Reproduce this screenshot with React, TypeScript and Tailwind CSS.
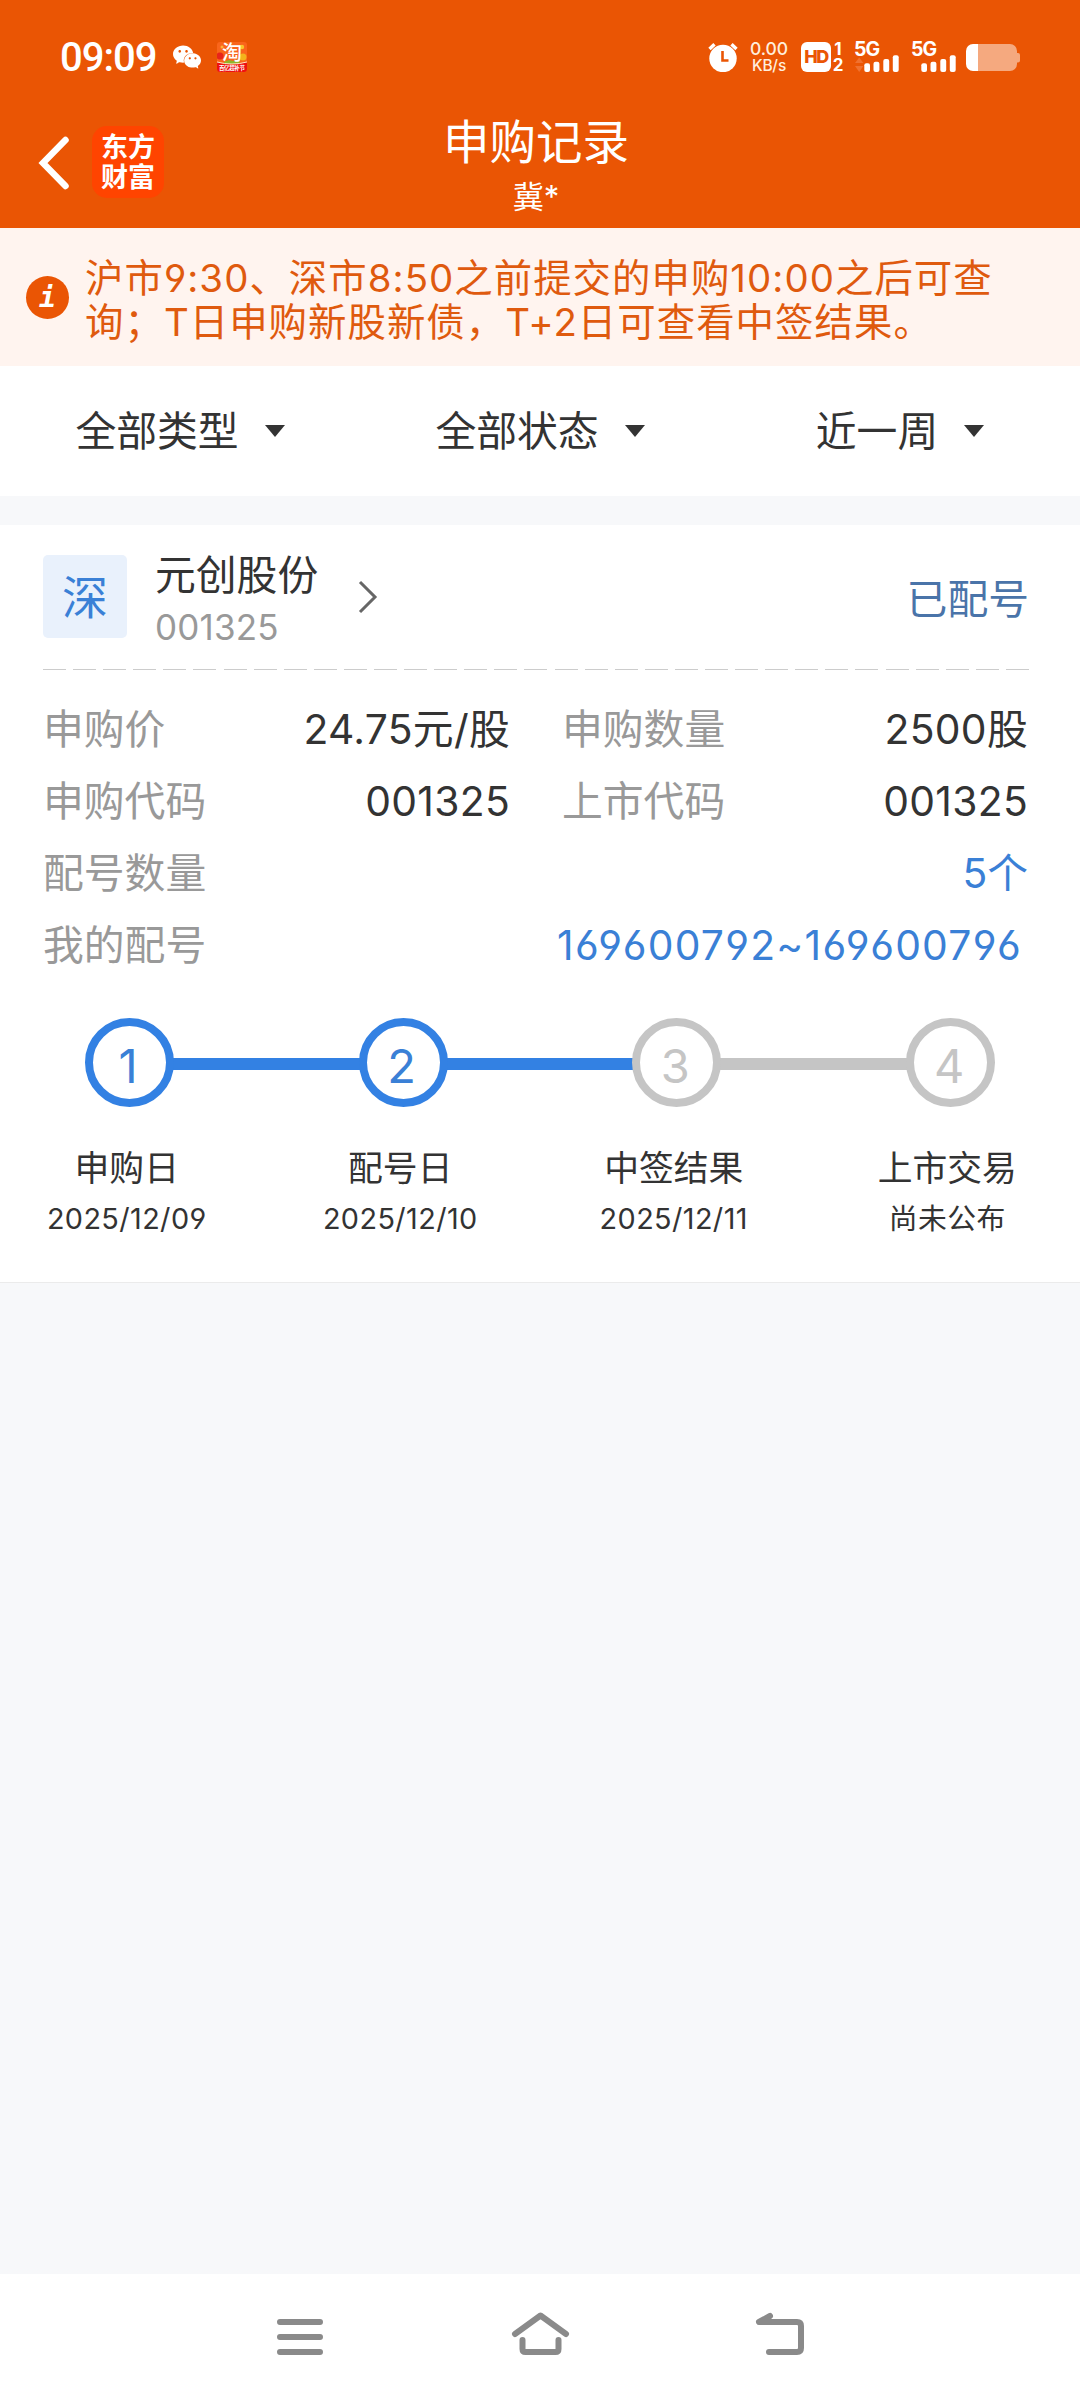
import { SiWechat } from "react-icons/si";

const filters = ["全部类型", "全部状态", "近一周"];

const steps = [
  { title: "申购日", date: "2025/12/09", done: true },
  { title: "配号日", date: "2025/12/10", done: true },
  { title: "中签结果", date: "2025/12/11", done: false },
  { title: "上市交易", date: "尚未公布", done: false },
];

function Signal({ data }: { data?: boolean }) {
  return (
    <div className="flex h-[30px] w-[44px] flex-col">
      <span className="ml-[-1px] text-[19.5px] leading-[15px] font-bold tracking-[-1px]">
        5G
      </span>
      <svg
        className="mt-[-2px]"
        width="44"
        height="17"
        viewBox="0 13 44 17"
        fill="#fff"
      >
        {data && (
          <path d="M4.2 15.5L8.4 21H0zM4.2 30L8.4 24H0z" fill="#f0712f" />
        )}
        <rect x="9.3" y="21.3" width="5.7" height="8.7" rx="2" />
        <rect x="18.5" y="19.7" width="5.9" height="10.3" rx="2" />
        <rect x="28.3" y="17" width="5.9" height="13" rx="2" />
        <rect x="37.8" y="13.3" width="5.9" height="16.7" rx="2" />
      </svg>
    </div>
  );
}

function StatusBar() {
  return (
    <div className="flex h-[114px] items-center pr-[60px] pl-[60px] text-white">
      <span className="w-[100px] pt-[2px] font-[Roboto] text-[40px] leading-none font-medium tracking-[-1px]">
        09:09
      </span>
      <SiWechat className="ml-[13px] h-[28px] w-[28px]" />
      <svg className="ml-[16px]" width="30" height="30" viewBox="0 0 30 30">
        <defs>
          <clipPath id="tb">
            <rect width="30" height="30" rx="3" />
          </clipPath>
        </defs>
        <g clipPath="url(#tb)">
          <rect width="30" height="30" fill="#f9651b" />
          <circle cx="3" cy="14" r="3.5" fill="#e8241a" />
          <circle cx="26" cy="15" r="3.5" fill="#f3b21c" />
          <circle cx="25" cy="5" r="2.2" fill="#f7c52a" />
          <circle cx="5" cy="5" r="1.5" fill="#fbb33a" />
          <path d="M7 20l5-2 4 1 6-2 1 5H7z" fill="#8fb52a" />
          <path d="M0 20q15 5 30 0v10H0z" fill="#ef1010" />
          <path d="M0 20q15 4 30 0" fill="none" stroke="#ffe0c0" />
          <text x="5" y="18" fontSize="20" fontWeight="500" fill="#fff">
            淘
          </text>
          <text
            x="2"
            y="28"
            fontSize="5.5"
            fontWeight="700"
            fill="#fff"
            textLength="26"
          >
            百亿超补节
          </text>
        </g>
      </svg>
      <div className="ml-auto flex items-center">
        <svg width="30" height="30" viewBox="0 0 30 30">
          <circle cx="15" cy="16.5" r="13.7" fill="#fff" />
          <path
            d="M1.5 7L6.5 2.2M28.5 7L23.5 2.2"
            stroke="#fff"
            strokeWidth="3.4"
          />
          <path
            d="M14.5 9v9.5h6"
            fill="none"
            stroke="#ea5504"
            strokeWidth="2.6"
          />
        </svg>
        <div className="ml-[12px] flex w-[38px] flex-col items-center font-medium text-[#ffeedd]">
          <span className="text-[17.5px] leading-[15px]">0.00</span>
          <span className="mt-[1px] text-[15.5px] leading-[17px] tracking-[-0.2px]">
            KB/s
          </span>
        </div>
        <div className="ml-[13px] flex h-[30px] w-[30px] items-center justify-center rounded-[6px] bg-white text-[18px] leading-none font-extrabold tracking-[-1.5px] text-[#ea5504]">
          HD
        </div>
        <div className="ml-[2px] flex w-[10px] flex-col items-center text-[17px] leading-[16px] font-bold">
          <span>1</span>
          <span>2</span>
        </div>
        <div className="ml-[12px] flex gap-[13px]">
          <Signal data />
          <Signal />
        </div>
        <svg className="ml-[10px]" width="54" height="27" viewBox="0 0 54 27">
          <path
            d="M12 0h32a7 7 0 0 1 7 7v2h1q2 0 2 2v5.5q0 2-2 2h-1V20a7 7 0 0 1-7 7H12z"
            fill="#f5a97f"
          />
          <path d="M12 0H7a7 7 0 0 0-7 7v13a7 7 0 0 0 7 7h5z" fill="#fff" />
        </svg>
      </div>
    </div>
  );
}

function TitleBar() {
  return (
    <div className="flex h-[114px] text-white">
      <div className="flex w-[360px] pt-[12px] pl-[37px]">
        <svg className="mt-[10px]" width="34" height="54" viewBox="0 0 34 54">
          <path
            d="M28.5 4L6 27l22.5 23"
            fill="none"
            stroke="#fff"
            strokeWidth="6.5"
            strokeLinecap="round"
          />
        </svg>
        <div className="ml-[21px] flex h-[72px] w-[72px] flex-col items-center justify-center rounded-[15px] bg-[#ff4400] pt-[2px] text-[27px] leading-[30px] font-bold">
          <span>东方</span>
          <span>财富</span>
        </div>
      </div>
      <div className="flex w-[352px] flex-col items-center">
        <h1 className="text-[46.5px] leading-[56px]">申购记录</h1>
        <p className="text-[31px] leading-[54px]">冀*</p>
      </div>
    </div>
  );
}

function Notice() {
  return (
    <div className="flex h-[138px] bg-[#fff4ef] pt-[28px] pl-[26px]">
      <div className="mt-[20px] flex h-[43px] w-[43px] items-center justify-center rounded-full bg-[#ea5504] font-['DejaVu_Sans_Mono'] text-[28px] leading-none font-bold text-white italic">
        i
      </div>
      <p className="ml-[16px] text-[38.4px] leading-[44px] tracking-[1.05px] whitespace-nowrap text-[#df5a0e]">
        沪市9:30、深市8:50之前提交的申购10:00之后可查
        <br />
        询；T日申购新股新债，T+2日可查看中签结果。
      </p>
    </div>
  );
}

function Filters() {
  return (
    <div className="grid h-[130px] grid-cols-3 bg-white">
      {filters.map((item) => (
        <div key={item} className="flex items-center justify-center">
          <span className="text-[40.8px] leading-none">{item}</span>
          <svg className="ml-[26px]" width="20" height="12" viewBox="0 0 20 12">
            <path d="M0 0h20L10 12z" fill="#333" />
          </svg>
        </div>
      ))}
    </div>
  );
}

function Field({ label, value }: { label: string; value: string }) {
  return (
    <div className="flex justify-between">
      <span className="text-[#999]">{label}</span>
      <span className="tracking-[0.3px]">{value}</span>
    </div>
  );
}

function Steps() {
  return (
    <div className="mt-[37px]">
      <div className="flex items-center pl-[85px]">
        {steps.map((step, idx) => (
          <div key={step.title} className="flex items-center">
            {idx > 0 && (
              <div
                className={`mx-[-4px] mt-[3px] h-[12px] w-[192.7px] ${
                  steps[idx - 1].done ? "bg-[#3381e3]" : "bg-[#c5c5c5]"
                }`}
              />
            )}
            <div
              className={`relative z-10 flex h-[89px] w-[89px] items-center justify-center rounded-full border-[8.5px] bg-white pt-[6px] pr-[3px] text-[47px] leading-none ${
                step.done
                  ? "border-[#3381e3] text-[#3a80d6]"
                  : "border-[#c5c5c5] text-[#c5c5c5]"
              }`}
            >
              {idx + 1}
            </div>
          </div>
        ))}
      </div>
      <div className="ml-[-10px] grid w-[1094px] grid-cols-4 text-center">
        {steps.map((step) => (
          <div key={step.title} className="pt-[36px]">
            <p className="text-[34.8px] leading-[50px]">{step.title}</p>
            <p className="text-[28.8px] leading-[52px] tracking-[0.4px]">
              {step.date}
            </p>
          </div>
        ))}
      </div>
    </div>
  );
}

function RecordCard() {
  return (
    <div className="mt-[29px] h-[758px] border-b border-[#ebebeb] bg-white pt-[30px]">
      <div className="flex h-[83px] pr-[51px] pl-[43px]">
        <div className="flex h-[83px] w-[84px] items-center justify-center rounded-[5px] bg-[#e9f1fc] text-[46px] leading-none text-[#3a80d6]">
          深
        </div>
        <div className="mt-[-6px] ml-[28px]">
          <p className="text-[40.8px] leading-[52px]">元创股份</p>
          <p className="text-[35px] leading-[52px] tracking-[0.2px] text-[#999]">
            001325
          </p>
        </div>
        <svg
          className="mt-[24px] ml-[39px]"
          width="22"
          height="36"
          viewBox="0 0 22 36"
        >
          <path d="M3 3l15 15L3 33" fill="none" stroke="#666" strokeWidth="3" />
        </svg>
        <span className="mt-[14px] ml-auto text-[40.8px] leading-[60px] text-[#4a74a9]">
          已配号
        </span>
      </div>
      <div className="mt-[31px] mr-[51px] ml-[43px] h-px bg-[repeating-linear-gradient(90deg,#ccc_0_23px,transparent_23px_30.09px)]" />
      <div className="mt-[23px] mr-[52px] ml-[43px] text-[40.8px] leading-[72px]">
        <div className="grid grid-cols-[467px_466px] gap-x-[52px]">
          <Field label="申购价" value="24.75元/股" />
          <Field label="申购数量" value="2500股" />
          <Field label="申购代码" value="001325" />
          <Field label="上市代码" value="001325" />
        </div>
        <div className="flex justify-between text-[#3a80d6]">
          <span className="text-[#999]">配号数量</span>
          <span>5个</span>
        </div>
        <div className="flex justify-between text-[#3a80d6]">
          <span className="text-[#999]">我的配号</span>
          <span className="mr-[6px] tracking-[1.25px]">
            169600792~169600796
          </span>
        </div>
      </div>
      <Steps />
    </div>
  );
}

function NavBar() {
  return (
    <div className="mt-auto flex h-[126px] justify-between bg-white pt-[34px] pr-[271px] pl-[272px]">
      <svg
        width="56"
        height="52"
        viewBox="0 0 56 52"
        stroke="#8a8a8a"
        strokeWidth="6"
        strokeLinecap="round"
      >
        <path d="M8 14h40M8 29h40M8 44h40" />
      </svg>
      <svg
        width="64"
        height="52"
        viewBox="0 0 64 52"
        fill="none"
        stroke="#8a8a8a"
        strokeWidth="6"
        strokeLinecap="round"
        strokeLinejoin="round"
      >
        <path d="M6 26L31.5 7.5 57 26M13.5 32v9q0 3 3 3h30q3 0 3-3v-9" />
      </svg>
      <svg
        width="56"
        height="52"
        viewBox="0 0 56 52"
        fill="none"
        stroke="#8a8a8a"
        strokeWidth="6"
        strokeLinecap="round"
        strokeLinejoin="round"
      >
        <path d="M17 8L6 14h38q4 0 4 4v22q0 4-4 4H16" />
      </svg>
    </div>
  );
}

export default function App() {
  return (
    <div className="flex h-[2400px] w-[1080px] flex-col overflow-hidden bg-[#f7f8fa] font-[Inter,'Noto_Sans_CJK_SC',sans-serif] text-[#333] [font-feature-settings:'cv03','cv04']">
      <div className="bg-[#ea5504]">
        <StatusBar />
        <TitleBar />
      </div>
      <Notice />
      <Filters />
      <RecordCard />
      <NavBar />
    </div>
  );
}
